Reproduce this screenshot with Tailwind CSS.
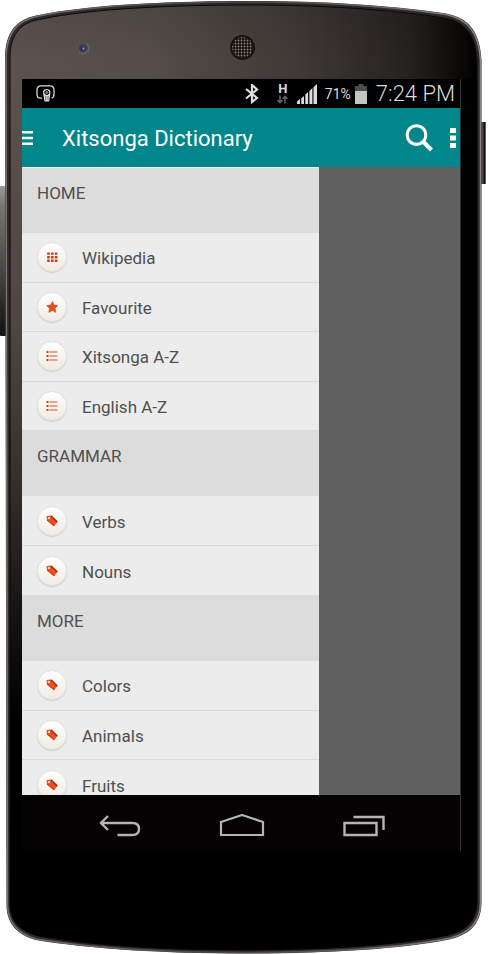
<!DOCTYPE html>
<html lang="en">
<head>
<meta charset="utf-8">
<meta name="viewport" content="width=device-width, initial-scale=1">
<title>Xitsonga Dictionary</title>
<script src="https://cdn.jsdelivr.net/npm/@tailwindcss/browser@4"></script>
</head>
<body class="bg-white font-[Roboto,sans-serif]">
<!-- shared icon shapes -->
<svg class="hidden" aria-hidden="true">
  <symbol id="tag" viewBox="0 0 12 12"><path d="M.5 1 5.500 .6 11.700 6.600 8 11.200 1 5.500z" fill="#f0501f"/><path d="M5.500.6 11.700 6.600 10.700 7.800 4.600 1.600z" fill="#9f3014"/><path d="M1 5.500 8 11.200 8.700 10.300 1 4.300z" fill="#d03a12"/><circle cx="3" cy="3" r="1.100" fill="#fff"/></symbol>
  <symbol id="list" viewBox="0 0 12 12"><path d="M.5 1h2v2h-2zM.5 5h2v2h-2zM.5 9h2v2h-2z" fill="#d8360f"/><path d="M3.500 1.400h8v1.200h-8zM3.500 5.400h8v1.200h-8zM3.500 9.400h8v1.200h-8z" fill="#d0502f"/></symbol>
  <symbol id="grid" viewBox="0 0 12 12"><path d="M1.200 1.400h2.600v2.400H1.200zM5 1.400h2.600v2.400H5zM8.800 1.400h2.600v2.400H8.800zM1.200 5h2.600v2.400H1.200zM5 5h2.600v2.400H5zM8.800 5h2.600v2.400H8.800zM1.200 8.600h2.600V11H1.200zM5 8.600h2.600V11H5zM8.800 8.600h2.600V11H8.800z" fill="#d8360f"/></symbol>
  <symbol id="star" viewBox="0 0 12 12"><path d="M6.300.4 8 4.100l3.900.5-2.800 2.800.7 4-3.500-1.900-3.500 1.900.7-4L.7 4.600l3.900-.5z" fill="#ee4b1e" stroke="#b93a17" stroke-width=".5"/></symbol>
</svg>
<main class="relative isolate pt-[79px] pr-[31px] pb-[103px] pl-[22px]">
  <!-- handset body -->
  <svg class="absolute inset-0 -z-10 h-full w-full" viewBox="0 0 492 954" preserveAspectRatio="none" aria-hidden="true">
    <defs>
      <linearGradient id="body" x1="0" x2="1" y1="0" y2="0"><stop offset="0" stop-color="#5c524e"/><stop offset=".3" stop-color="#544d49"/><stop offset=".6" stop-color="#403b38"/><stop offset=".85" stop-color="#26221f"/><stop offset=".96" stop-color="#0c0a09"/><stop offset="1" stop-color="#000"/></linearGradient>
      <linearGradient id="shade" x1="0" x2="0" y1="0" y2="1"><stop offset="0" stop-color="#000" stop-opacity=".1"/><stop offset=".06" stop-color="#000" stop-opacity="0"/><stop offset=".34" stop-color="#000" stop-opacity=".15"/><stop offset=".5" stop-color="#000" stop-opacity=".42"/><stop offset=".64" stop-color="#000" stop-opacity=".75"/><stop offset=".76" stop-color="#000"/><stop offset="1" stop-color="#000"/></linearGradient>
      <linearGradient id="key" x1="0" x2="0" y1="0" y2="1"><stop offset="0" stop-color="#999"/><stop offset=".15" stop-color="#77736f"/><stop offset=".6" stop-color="#45413f"/><stop offset="1" stop-color="#111"/></linearGradient>
      <linearGradient id="rim" x1="0" x2="1" y1="0" y2="0"><stop offset="0" stop-color="#77706f"/><stop offset=".5" stop-color="#4a4543"/><stop offset="1" stop-color="#8a8284"/></linearGradient>
      <pattern id="mesh" width="3" height="3" patternUnits="userSpaceOnUse"><circle cx="1.500" cy="1.500" r=".9" fill="#8a827b"/></pattern>
    </defs>
    <rect x="0" y="186" width="6" height="150" rx="1" fill="url(#key)"/>
    <rect x="480" y="122" width="5.500" height="62" fill="#4a4442"/>
    <rect x="483.500" y="122" width="2" height="62" fill="#151211"/>
    <path d="M5 56C6 33 15 20 36 15.500 90 4 180 1 250 1c70 0 140 4 196 12.500C470 18 480 33 481.500 60V902c0 21-11 32-30 37-55 11-130 14.500-208 14.500S90 949 36 940C17 935 6.500 923 6.500 905z" fill="#2f2a2a"/>
    <path d="M6 56C7 34 16 21 36.500 16.500 90 5 180 2 250 2c70 0 140 4 196 12.500C469 19 479 34 480.500 60V902c0 20-11 31-30 36-55 11-130 14.500-207 14.500S90 948 36 939C18 934 7.500 922 7.500 905z" fill="none" stroke="url(#rim)" stroke-width="1.500"/>
    <path d="M10 58C10 36 19 23 39 19.500 92 8 180 5 250 5c68 0 138 4 194 13 22 4 32 18 33 44V901c0 19-10 29-28 34-55 11-128 15-205 15S92 946 38 936C20 931 10 921 10 904z" fill="url(#body)" stroke="#0c0909" stroke-width="1"/>
    <path d="M10 58C10 36 19 23 39 19.500 92 8 180 5 250 5c68 0 138 4 194 13 22 4 32 18 33 44V901c0 19-10 29-28 34-55 11-128 15-205 15S92 946 38 936C20 931 10 921 10 904z" fill="url(#shade)"/>
    <rect x="461" y="79" width="16" height="780" fill="#020101"/>
    <circle cx="83.500" cy="48.500" r="6" fill="#6c635f"/><circle cx="83" cy="48" r="5" fill="#4a4549"/><circle cx="82.500" cy="48.500" r="2.800" fill="#352f66"/><circle cx="83.500" cy="48.500" r="1" fill="#a59fd0"/>
    <circle cx="242.500" cy="47.500" r="12.500" fill="#16120f"/><circle cx="242.500" cy="47.500" r="10.500" fill="url(#mesh)"/>
  </svg>

  <section aria-label="Phone screen" class="border-r border-[#333]">
    <!-- status bar -->
    <div class="flex h-[29px] items-center bg-black pr-[5px] pl-[14px] text-[#dcdcdc]">
      <svg class="h-[18px] w-[19px]" viewBox="0 0 19 18" fill="none" stroke="#d8d8d8" aria-hidden="true"><path d="M6 13.200H4.500Q1 13 1 9.500V5Q1 .8 5 .8h9q4 0 4 4.200v4.500q0 3-2.500 3.700" stroke-width="1.300"/><path d="M7 7.500Q7 4 10.700 4T14.500 7.500L13.200 16.500H8.500z" fill="#d8d8d8" stroke="none"/><circle cx="10.800" cy="7.500" r="2" fill="#777" stroke="#000"/><path d="M9.300 12h1M11.500 12h1M9.300 14h1M11.500 14h1" stroke="#000"/></svg>
      <div class="ml-auto flex items-center">
        <svg class="h-5 w-[14px]" viewBox="0 0 14 20" fill="none" stroke="#dedede" stroke-width="2.200" aria-label="Bluetooth" role="img"><path d="M1 5 12 14 7 18V1L12 5.500 1 14.500"/></svg>
        <div class="ml-[18px] flex w-3 flex-col items-center">
          <span class="text-[13px] leading-[12px] font-bold">H</span>
          <svg class="h-[9px] w-[11px]" viewBox="0 0 11 9" fill="none" stroke="#666" stroke-width="1.500" aria-hidden="true"><path d="M3 .5v7M.6 5 3 7.700 5.400 5M8 8.500v-7M5.600 4 8 1.300 10.400 4"/></svg>
        </div>
        <svg class="ml-2 h-5 w-5" viewBox="0 0 20 20" fill="#dcdcdc" aria-label="Signal" role="img"><path d="M0 20v-2.500L3 15v5zM4.200 20v-5.500l2.800-2.500v8zM8.300 20v-9.300l2.800-2.600V20zM12.400 20V7l3-3v16zM16.500 20V3.200L20 0v20z"/></svg>
        <span class="ml-2 text-[14px] leading-5">71%</span>
        <svg class="ml-1 h-5 w-3" viewBox="0 0 12 20" aria-label="Battery" role="img"><path d="M3.500 0h5v2H12v5H0V2h3.500z" fill="#4c4c4c"/><path d="M0 7h12v13H0z" fill="#c4c4c4"/></svg>
        <time class="ml-[9px] text-[22px] leading-7 font-light whitespace-nowrap">7:24 PM</time>
      </div>
    </div>

    <!-- app bar -->
    <header class="flex h-[59px] items-center bg-[#00868b] pr-1 pt-px text-white">
      <button type="button" aria-label="Menu" class="flex h-10 w-[11px]"><svg class="m-auto h-[14px] w-[11px]" viewBox="0 0 11 14" fill="#fff" aria-hidden="true"><path d="M0 0h11v2.500H0zM0 5.800h11v2.500H0zM0 11.500h11V14H0z"/></svg></button>
      <h1 class="ml-[29px] pt-0.5 text-[22px] leading-7">Xitsonga Dictionary</h1>
      <button type="button" aria-label="Search" class="ml-auto"><svg class="h-7 w-7" viewBox="0 0 28 28" fill="none" stroke="#fff" aria-hidden="true"><circle cx="11.500" cy="11" r="9.300" stroke-width="3"/><path d="M18 17.500 26.500 26" stroke-width="4"/></svg></button>
      <button type="button" aria-label="More options" class="ml-4"><svg class="h-5 w-[7px]" viewBox="0 0 7 20" fill="#fff" aria-hidden="true"><path d="M1 0h6v5H1zM1 7.500h6v5H1zM1 15h6v5H1z"/></svg></button>
    </header>

    <!-- drawer over the dimmed page -->
    <div class="flex h-[628px] overflow-hidden bg-[#616161]">
      <nav aria-label="Dictionary" class="w-[297px] shrink-0 bg-[#ececec] text-[17px] leading-6 text-[#505050]">
        <section class="flex h-[263px] flex-col">
          <h2 class="h-[66px] bg-[#dcdcdc] pt-[14px] pl-[15px] shadow-[inset_0_1px_0_#eee]">HOME</h2>
          <ul class="flex flex-1 flex-col divide-y divide-[#d9d9d9]">
            <li class="flex flex-1"><a href="#wikipedia" class="flex flex-1 items-center gap-[15px] pl-[15px]"><span class="flex size-[30px] items-center justify-center rounded-full border border-[#e2e0dc] bg-linear-to-b from-white to-[#f1ebe1] shadow-[0_1px_1px_#0002]"><svg class="size-3" aria-hidden="true"><use href="#grid"/></svg></span><span class="pt-0.5">Wikipedia</span></a></li>
            <li class="flex flex-1"><a href="#favourite" class="flex flex-1 items-center gap-[15px] pl-[15px]"><span class="flex size-[30px] items-center justify-center rounded-full border border-[#e2e0dc] bg-linear-to-b from-white to-[#f1ebe1] shadow-[0_1px_1px_#0002]"><svg class="size-3" aria-hidden="true"><use href="#star"/></svg></span><span class="pt-0.5">Favourite</span></a></li>
            <li class="flex flex-1"><a href="#xitsonga" class="flex flex-1 items-center gap-[15px] pl-[15px]"><span class="flex size-[30px] items-center justify-center rounded-full border border-[#e2e0dc] bg-linear-to-b from-white to-[#f1ebe1] shadow-[0_1px_1px_#0002]"><svg class="size-3" aria-hidden="true"><use href="#list"/></svg></span><span class="pt-0.5">Xitsonga A-Z</span></a></li>
            <li class="flex flex-1"><a href="#english" class="flex flex-1 items-center gap-[15px] pl-[15px]"><span class="flex size-[30px] items-center justify-center rounded-full border border-[#e2e0dc] bg-linear-to-b from-white to-[#f1ebe1] shadow-[0_1px_1px_#0002]"><svg class="size-3" aria-hidden="true"><use href="#list"/></svg></span><span class="pt-0.5">English A-Z</span></a></li>
          </ul>
        </section>
        <section class="flex h-[165px] flex-col">
          <h2 class="h-[66px] bg-[#dcdcdc] pt-[14px] pl-[15px]">GRAMMAR</h2>
          <ul class="flex flex-1 flex-col divide-y divide-[#d9d9d9]">
            <li class="flex flex-1"><a href="#verbs" class="flex flex-1 items-center gap-[15px] pl-[15px]"><span class="flex size-[30px] items-center justify-center rounded-full border border-[#e2e0dc] bg-linear-to-b from-white to-[#f1ebe1] shadow-[0_1px_1px_#0002]"><svg class="size-3" aria-hidden="true"><use href="#tag"/></svg></span><span class="pt-0.5">Verbs</span></a></li>
            <li class="flex flex-1"><a href="#nouns" class="flex flex-1 items-center gap-[15px] pl-[15px]"><span class="flex size-[30px] items-center justify-center rounded-full border border-[#e2e0dc] bg-linear-to-b from-white to-[#f1ebe1] shadow-[0_1px_1px_#0002]"><svg class="size-3" aria-hidden="true"><use href="#tag"/></svg></span><span class="pt-0.5">Nouns</span></a></li>
          </ul>
        </section>
        <section class="flex h-[214px] flex-col">
          <h2 class="h-[66px] bg-[#dcdcdc] pt-[14px] pl-[15px]">MORE</h2>
          <ul class="flex flex-1 flex-col divide-y divide-[#d9d9d9]">
            <li class="flex flex-1"><a href="#colors" class="flex flex-1 items-center gap-[15px] pl-[15px]"><span class="flex size-[30px] items-center justify-center rounded-full border border-[#e2e0dc] bg-linear-to-b from-white to-[#f1ebe1] shadow-[0_1px_1px_#0002]"><svg class="size-3" aria-hidden="true"><use href="#tag"/></svg></span><span class="pt-0.5">Colors</span></a></li>
            <li class="flex flex-1"><a href="#animals" class="flex flex-1 items-center gap-[15px] pl-[15px]"><span class="flex size-[30px] items-center justify-center rounded-full border border-[#e2e0dc] bg-linear-to-b from-white to-[#f1ebe1] shadow-[0_1px_1px_#0002]"><svg class="size-3" aria-hidden="true"><use href="#tag"/></svg></span><span class="pt-0.5">Animals</span></a></li>
            <li class="flex flex-1"><a href="#fruits" class="flex flex-1 items-center gap-[15px] pl-[15px]"><span class="flex size-[30px] items-center justify-center rounded-full border border-[#e2e0dc] bg-linear-to-b from-white to-[#f1ebe1] shadow-[0_1px_1px_#0002]"><svg class="size-3" aria-hidden="true"><use href="#tag"/></svg></span><span class="pt-0.5">Fruits</span></a></li>
          </ul>
        </section>
      </nav>
    </div>

    <!-- system navigation -->
    <div class="flex h-14 items-center justify-between bg-[#040203] pt-[5px] pr-[75px] pl-[77px]">
      <button type="button" aria-label="Back"><svg class="h-6 w-[42px]" viewBox="0 0 42 24" fill="none" stroke="#b4b4b4" stroke-width="2.400" aria-hidden="true"><path d="M9 2 2 9 9 16M2 9H33.500Q40 9 40 15T33.500 21H18.500"/></svg></button>
      <button type="button" aria-label="Home"><svg class="h-6 w-[46px]" viewBox="0 0 46 24" fill="none" stroke="#b4b4b4" stroke-width="2.200" aria-hidden="true"><path d="M2 21V8L23 1 44 8V21z"/></svg></button>
      <button type="button" aria-label="Recent apps"><svg class="h-6 w-[42px]" viewBox="0 0 42 24" fill="none" stroke="#b4b4b4" stroke-width="2.400" aria-hidden="true"><path d="M1.500 9h32v12h-32zM10.500 3h30v13"/></svg></button>
    </div>
  </section>
</main>
</body>
</html>
